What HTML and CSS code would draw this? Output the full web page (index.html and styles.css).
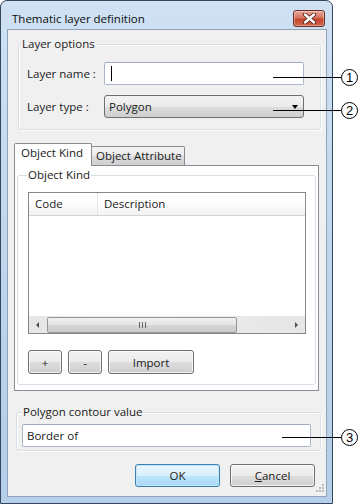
FILE: index.html
```html
<!DOCTYPE html>
<html lang="en">
<head>
    <meta charset="UTF-8">
    <title>Thematic layer definition</title>
    <link rel="stylesheet" href="styles.css">
</head>
<body>
    <div class="window">
        <div class="titlebar">
            <span class="title">Thematic layer definition</span>
            <div class="close">
                <svg width="15" height="11" viewBox="0 0 15 11">
                    <path d="M3 1.5 L12 9.5 M12 1.5 L3 9.5" stroke="#5a2018" stroke-width="4.2" stroke-linecap="round"/>
                    <path d="M3 1.5 L12 9.5 M12 1.5 L3 9.5" stroke="#fff" stroke-width="2.4" stroke-linecap="round"/>
                </svg>
            </div>
        </div>

        <div class="client">
            <!-- layer options -->
            <div class="group options">
                <div class="group_title">Layer options</div>
                <div class="form_row">
                    <label>Layer name :</label>
                    <div class="textbox name"><span class="caret"></span></div>
                </div>
                <div class="form_row">
                    <label>Layer type :</label>
                    <div class="combo">
                        <span>Polygon</span>
                        <span class="arrow"></span>
                    </div>
                </div>
            </div>

            <!-- tabs -->
            <div class="tabs">
                <div class="tab_strip">
                    <div class="tab active">Object Kind</div>
                    <div class="tab">Object Attribute</div>
                </div>
                <div class="tab_panel">
                    <div class="group kind">
                        <div class="group_title">Object Kind</div>
                        <div class="listview">
                            <div class="lv_header">
                                <div class="lv_col code">Code</div>
                                <div class="lv_col desc">Description</div>
                            </div>
                            <div class="lv_body"></div>
                            <div class="hscroll">
                                <span class="sc_arrow left"></span>
                                <div class="sc_track">
                                    <div class="sc_thumb"><span class="grip"></span></div>
                                </div>
                                <span class="sc_arrow right"></span>
                            </div>
                        </div>
                        <div class="kind_buttons">
                            <button class="btn small">+</button>
                            <button class="btn small">-</button>
                            <button class="btn import">Import</button>
                        </div>
                    </div>
                </div>
            </div>

            <!-- polygon contour -->
            <div class="group contour">
                <div class="group_title">Polygon contour value</div>
                <div class="textbox contour_box">Border of</div>
            </div>

            <div class="dialog_buttons">
                <button class="btn dlg default">OK</button>
                <button class="btn dlg"><u>C</u>ancel</button>
            </div>

            <svg class="sizegrip" width="10" height="10" viewBox="0 0 10 10">
                <rect x="8" y="0" width="2" height="2" fill="#b8bcc2"/>
                <rect x="5" y="3" width="2" height="2" fill="#b8bcc2"/>
                <rect x="8" y="3" width="2" height="2" fill="#b8bcc2"/>
                <rect x="2" y="6" width="2" height="2" fill="#b8bcc2"/>
                <rect x="5" y="6" width="2" height="2" fill="#b8bcc2"/>
                <rect x="8" y="6" width="2" height="2" fill="#b8bcc2"/>
            </svg>
        </div>
    </div>

    <!-- callouts -->
    <div class="callout c1"><span class="lead"></span><span class="num">1</span></div>
    <div class="callout c2"><span class="lead"></span><span class="num">2</span></div>
    <div class="callout c3"><span class="lead"></span><span class="num">3</span></div>
</body>
</html>
```

FILE: styles.css
```css
*{
    margin: 0;
    padding: 0;
    box-sizing: border-box;
}
body{
    background: #fff;
    font-family: 'Open Sans', 'Noto Sans', sans-serif;
    font-size: 11.5px;
    color: #1a1a1a;
    position: relative;
    width: 360px;
    height: 504px;
    overflow: hidden;
}
button{
    font-family: inherit;
    font-size: 11.5px;
    color: #1a1a1a;
}

/* window frame */
.window{
    width: 333px;
    height: 504px;
    border: 1px solid #34465a;
    border-radius: 7px 7px 0 0;
    padding: 0 5px 6px 6px;
    background: linear-gradient(#cfe1f3, #bcd4ec 60%, #b4cfea);
    display: flex;
    flex-direction: column;
}
.titlebar{
    height: 28px;
    padding: 6px 2px 0 5px;
    display: flex;
    align-items: center;
    justify-content: space-between;
}
.title{
    font-size: 11.5px;
    color: #0c0c0c;
}
.close{
    width: 32px;
    height: 17px;
    border: 1px solid #6b2d24;
    border-radius: 3px;
    background: linear-gradient(#e9a99b, #d7715e 45%, #c2452c 55%, #d0664b);
    box-shadow: inset 0 0 0 1px rgba(255,255,255,.35);
    display: flex;
    align-items: center;
    justify-content: center;
}
.client{
    flex: 1;
    border: 1px solid #8fa4bb;
    background: #f0f0f0;
    position: relative;
}

/* group boxes */
.group{
    border: 1px solid #d5dfe5;
    border-radius: 3px;
    box-shadow: inset 1px 1px 0 #fff, 1px 1px 0 #fff;
}
.group_title{
    display: table;
    line-height: 16px;
    height: 16px;
    margin: -9px 0 0 3px;
    padding: 0 1px;
    background: #f0f0f0;
}
.options{
    margin: 14px 5px 0 10px;
    padding: 0 0 11px 8px;
}
.options .group_title{
    margin-left: -6px;
}
.form_row{
    display: flex;
    align-items: center;
    margin-top: 10px;
}
.form_row:first-of-type{
    margin-top: 13px;
}
.form_row label{
    width: 77px;
}
.textbox{
    background: #fff;
    border: 1px solid #abb7c6;
    border-top-color: #a0acbc;
    border-radius: 2px;
    height: 23px;
    display: flex;
    align-items: center;
}
.name{
    width: 200px;
    padding-left: 6px;
}
.caret{
    width: 1px;
    height: 15px;
    background: #000;
}
.combo{
    width: 200px;
    height: 23px;
    border: 1px solid #707070;
    border-radius: 3px;
    background: linear-gradient(#f2f2f2, #ebebeb 50%, #dddddd 50%, #cfcfcf);
    display: flex;
    align-items: center;
    justify-content: space-between;
    padding: 0 5px 0 4px;
}
.arrow{
    width: 0;
    height: 0;
    border-left: 3.5px solid transparent;
    border-right: 3.5px solid transparent;
    border-top: 4px solid #000;
}

/* tabs */
.tabs{
    margin: 13px 7px 0 6px;
}
.tab_strip{
    display: flex;
    align-items: flex-end;
    height: 22px;
}
.tab{
    height: 19px;
    width: 94px;
    margin-left: -1px;
    padding: 1px 0 0 4px;
    border: 1px solid #898c95;
    border-bottom: 0;
    border-radius: 2px 2px 0 0;
    background: linear-gradient(#f3f3f3, #ebebeb 50%, #dddddd 50%, #cfcfcf);
}
.tab.active{
    height: 23px;
    width: 78px;
    margin: 0 0 -1px 0;
    padding: 1px 0 0 6px;
    background: #fff;
    position: relative;
    z-index: 1;
}
.tab_panel{
    height: 226px;
    border: 1px solid #898c95;
    background: #fff;
    padding: 9px 2px 5px 2px;
}
.kind{
    padding: 0 9px 10px 10px;
}
.kind .group_title{
    margin-left: -1px;
    background: #fff;
}

/* list view */
.listview{
    margin-top: 9px;
    height: 142px;
    border: 1px solid #828790;
    background: #fff;
    display: flex;
    flex-direction: column;
}
.lv_header{
    height: 23px;
    display: flex;
    background: linear-gradient(#fff, #fff 40%, #f1f2f4);
    border-bottom: 1px solid #d5d5d5;
}
.lv_col{
    padding-left: 6px;
    line-height: 22px;
}
.code{
    width: 69px;
    border-right: 1px solid #e3e5e8;
}
.lv_body{
    flex: 1;
}
.hscroll{
    height: 17px;
    display: flex;
    align-items: center;
    background: linear-gradient(90deg, #e6e6e6, #ececec 50%, #e6e6e6);
}
.sc_arrow{
    width: 17px;
    display: flex;
    justify-content: center;
}
.sc_arrow.left::before, .sc_arrow.right::before{
    content: '';
    border-top: 3px solid transparent;
    border-bottom: 3px solid transparent;
}
.sc_arrow.left::before{
    border-right: 3px solid #505050;
}
.sc_arrow.right::before{
    border-left: 3px solid #505050;
}
.sc_track{
    flex: 1;
}
.sc_thumb{
    width: 190px;
    height: 16px;
    margin-left: 1px;
    border: 1px solid #979797;
    border-radius: 2px;
    background: linear-gradient(#f2f2f2, #e3e3e3 50%, #d6d6d6 50%, #cbcbcb);
    display: flex;
    align-items: center;
    justify-content: center;
}
.grip{
    width: 7px;
    height: 6px;
    border-left: 1px solid #666;
    border-right: 1px solid #666;
    position: relative;
}
.grip::after{
    content: '';
    position: absolute;
    left: 2px;
    top: 0;
    width: 1px;
    height: 6px;
    background: #666;
}

/* buttons */
.btn{
    height: 24px;
    border: 1px solid #707070;
    border-radius: 3px;
    background: linear-gradient(#f2f2f2, #ebebeb 50%, #dddddd 50%, #cfcfcf);
    box-shadow: inset 0 0 0 1px rgba(255,255,255,.7);
}
.kind_buttons{
    display: flex;
    gap: 6px;
    margin-top: 16px;
}
.small{
    width: 34px;
}
.import{
    width: 86px;
}

.contour{
    margin: 21px 5px 0 8px;
    padding: 0 9px 3px 5px;
}
.contour .group_title{
    margin-left: 0;
}
.contour_box{
    margin-top: 4px;
    padding-left: 4px;
}

.dialog_buttons{
    display: flex;
    justify-content: flex-end;
    gap: 10px;
    margin: 13px 11px 0 0;
}
.dlg{
    width: 85px;
    height: 23px;
}
.dlg.default{
    border-color: #3c7fb1;
    box-shadow: inset 0 0 0 1px #c5e6f8;
    background: linear-gradient(#eaf6fd, #d9f0fc 50%, #bee6fd 50%, #a7d9f5);
}
.sizegrip{
    position: absolute;
    right: 2px;
    bottom: 2px;
}

/* callouts over the screenshot */
.callout{
    position: absolute;
    display: flex;
    align-items: center;
    height: 17px;
    right: 2px;
}
.lead{
    flex: 1;
    height: 1.5px;
    background: #000;
}
.num{
    width: 17px;
    height: 17px;
    border: 1.3px solid #000;
    border-radius: 50%;
    font-family: 'Liberation Sans', sans-serif;
    font-size: 13px;
    line-height: 15px;
    text-align: center;
    color: #000;
    background: #fff;
}
.c1{
    top: 69px;
    left: 273px;
}
.c2{
    top: 102px;
    left: 273px;
}
.c3{
    top: 429px;
    left: 282px;
}
```
